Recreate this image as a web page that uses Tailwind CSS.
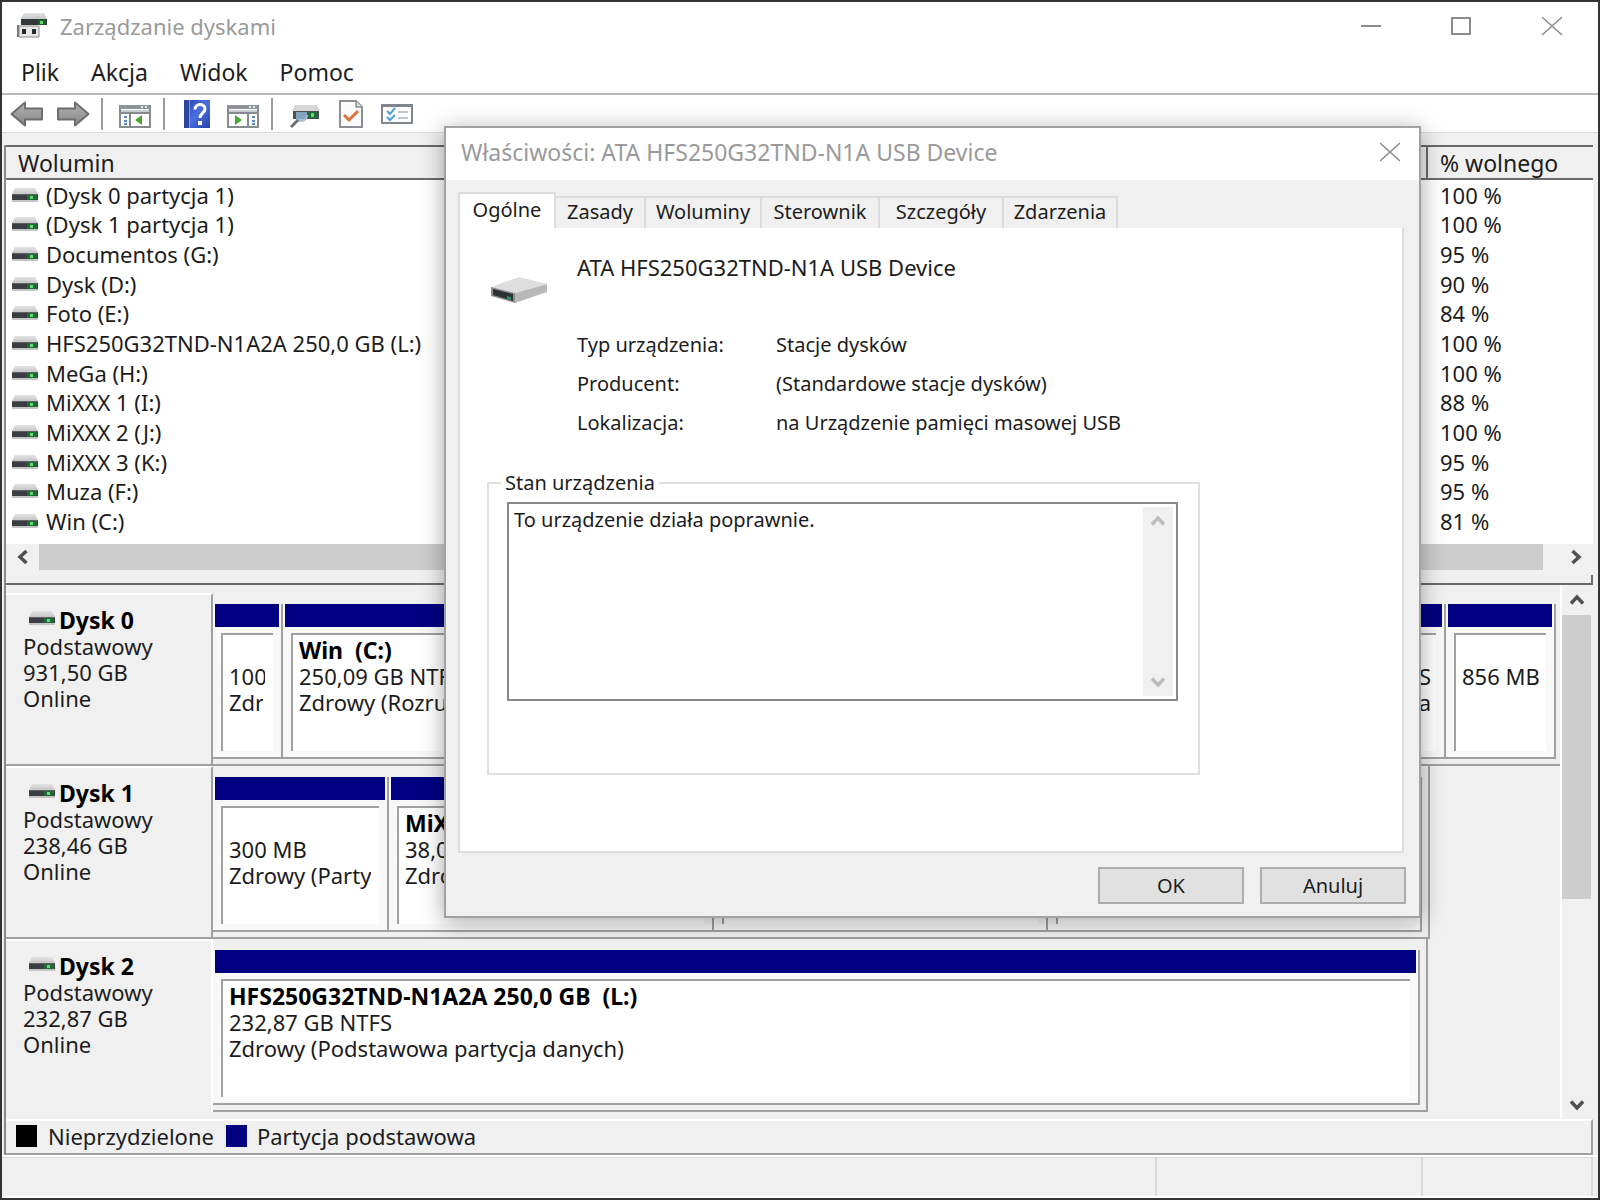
<!DOCTYPE html>
<html lang="pl">
<head>
<meta charset="utf-8">
<meta name="viewport" content="width=device-width, initial-scale=1">
<title>Zarządzanie dyskami</title>
<script src="https://cdn.jsdelivr.net/npm/@tailwindcss/browser@4"></script>
</head>
<body class="bg-[#333] font-['Noto_Sans',sans-serif] text-[22px] leading-[26px] text-[#1c1c1c]">

<!-- Shared icons -->
<svg class="absolute h-0 w-0" aria-hidden="true">
  <defs>
    <linearGradient id="lid" x1="0" y1="0" x2="0" y2="1"><stop offset="0" stop-color="#e4e4e4"/><stop offset="1" stop-color="#c6c6c6"/></linearGradient>
    <linearGradient id="arrowFill" x1="0" y1="0" x2="0" y2="1"><stop offset="0" stop-color="#b4b4b4"/><stop offset="1" stop-color="#858585"/></linearGradient>
    <linearGradient id="helpFill" x1="0" y1="0" x2="1" y2="1"><stop offset="0" stop-color="#2a44ac"/><stop offset="0.5" stop-color="#4a6fdc"/><stop offset="1" stop-color="#2742a8"/></linearGradient>
    <symbol id="drive" viewBox="0 0 26 14">
      <path d="M3 0h20l3 6H0z" fill="url(#lid)"/>
      <path d="M0 6h26v6H0z" fill="#3a3d42"/>
      <path d="M0 6h26v1H0z" fill="#5d6065"/>
      <path d="M15 7h10v5H15z" fill="#1f6b33"/>
      <path d="M18 8h3v3h-3z" fill="#63d873"/>
      <path d="M0 12h26v2H0z" fill="#c4c4c4"/>
    </symbol>
    <symbol id="arrow" viewBox="0 0 34 26">
      <path d="M1.500 13 15 1.500v6h17v11H15v6z" fill="url(#arrowFill)" stroke="#6e6e6e" stroke-width="2" stroke-linejoin="round"/>
    </symbol>
    <symbol id="chev" viewBox="0 0 16 12">
      <path d="M2 9.500 8 3l6 6.500" fill="none" stroke="currentColor" stroke-width="3.500"/>
    </symbol>
  </defs>
</svg>

<div class="relative flex min-h-screen flex-col border-2 border-[#333] bg-[#f0f0f0]">

  <!-- Title bar -->
  <header class="flex h-[51px] items-center bg-white pb-[3px] pl-[14px]">
    <svg class="h-7 w-8" viewBox="0 0 32 28" aria-hidden="true">
      <path d="M8 1h20l3 6H5z" fill="url(#lid)"/>
      <path d="M5 7h26v6H5z" fill="#33363b"/>
      <path d="M22 7h8v6h-8z" fill="#1f5c2e"/><path d="M24 9h3v3h-3z" fill="#63d873"/>
      <path d="M1 13h2v12H1z" fill="#777"/>
      <path d="M3 14h20v11H3z" fill="#e6e6e6" stroke="#8b8b8b"/>
      <path d="M6 17h4v5H6zM16 17h4v5h-4z" fill="#26282b"/>
    </svg>
    <h1 class="ml-3 flex-1 text-[#9a9a9a]">Zarządzanie dyskami</h1>
    <button class="flex h-full w-[90px] items-center justify-center" aria-label="Minimalizuj"><svg class="h-5 w-5" viewBox="0 0 20 20"><path d="M0 10h20" stroke="#8c8c8c" stroke-width="2"/></svg></button>
    <button class="flex h-full w-[90px] items-center justify-center" aria-label="Maksymalizuj"><svg class="h-5 w-5" viewBox="0 0 20 20"><path d="M1 2h18v16H1z" fill="none" stroke="#8c8c8c" stroke-width="2"/></svg></button>
    <button class="flex h-full w-[92px] items-center justify-center" aria-label="Zamknij"><svg class="h-5 w-5" viewBox="0 0 20 20"><path d="M0 1l20 18M20 1 0 19" stroke="#8c8c8c" stroke-width="1.500"/></svg></button>
  </header>

  <!-- Menu -->
  <nav class="flex h-10 items-center bg-white pb-[2px] pl-[3px] text-[23px]">
    <button class="px-4">Plik</button>
    <button class="px-4">Akcja</button>
    <button class="px-4">Widok</button>
    <button class="px-4">Pomoc</button>
  </nav>

  <!-- Toolbar -->
  <div class="flex h-10 items-center border-t-2 border-b border-t-[#b9b9b9] border-b-[#dcdcdc] bg-white pl-[2px]" role="toolbar">
    <button class="flex w-[46px] justify-center" aria-label="Wstecz"><svg class="h-[26px] w-[34px]"><use href="#arrow"/></svg></button>
    <button class="flex w-[46px] justify-center" aria-label="Dalej"><svg class="h-[26px] w-[34px] -scale-x-100"><use href="#arrow"/></svg></button>
    <span class="mr-[9px] ml-[5px] h-8 w-[2px] bg-[#9c9c9c]"></span>
    <button class="flex w-[46px] justify-center" aria-label="Pokaż drzewo konsoli">
      <svg class="h-7 w-8" viewBox="0 0 32 28"><path d="M1 6h30v21H1z" fill="#fff" stroke="#868b92" stroke-width="2"/><path d="M1 5h30v4H1z" fill="#8d949c"/><path d="M2 10h28v2H2z" fill="#c9ccd0"/><path d="M22 6h2v2h-2zM26 6h2v2h-2z" fill="#e8e8e8"/><path d="M1 13h30M11 13v14" stroke="#868b92" stroke-width="2"/><path d="M5 16h3v2H5zM5 20h3v2H5zM5 23h3v2H5z" fill="#5c8ccb"/><path d="M23 15v10l-7-5z" fill="#44a82c"/></svg>
    </button>
    <span class="mr-[9px] ml-[5px] h-8 w-[2px] bg-[#9c9c9c]"></span>
    <button class="flex w-[46px] justify-center" aria-label="Pomoc">
      <svg class="h-7 w-[26px]" viewBox="0 0 26 28"><path d="M0 0h26v28H0z" fill="url(#helpFill)"/><path d="M0 0h5v28H0z" fill="#2b459f"/><path d="M5 0h1v28H5z" fill="#7d97e2"/><path d="M11 9.500c0-6.500 10-6.500 10-.5 0 4-5 4-5 9" fill="none" stroke="#fff" stroke-width="3"/><path d="M14 21h4v4h-4z" fill="#fff"/></svg>
    </button>
    <button class="flex w-[46px] justify-center" aria-label="Pokaż okienko akcji">
      <svg class="h-7 w-8" viewBox="0 0 32 28"><path d="M1 6h30v21H1z" fill="#fff" stroke="#868b92" stroke-width="2"/><path d="M1 5h30v4H1z" fill="#8d949c"/><path d="M2 10h28v2H2z" fill="#c9ccd0"/><path d="M22 6h2v2h-2zM26 6h2v2h-2z" fill="#e8e8e8"/><path d="M1 13h30M21 13v14" stroke="#868b92" stroke-width="2"/><path d="M25 16h3v2h-3zM25 20h3v2h-3zM25 23h3v2h-3z" fill="#5c8ccb"/><path d="M8 15v10l7-5z" fill="#44a82c"/></svg>
    </button>
    <span class="mr-[9px] ml-[5px] h-8 w-[2px] bg-[#9c9c9c]"></span>
    <button class="flex w-[46px] justify-center" aria-label="Odśwież">
      <svg class="h-7 w-[30px]" viewBox="0 0 30 28"><path d="M5 5h22l3 6H2z" fill="#d6d6d6"/><path d="M3 11h26v8H3z" fill="#4b5157"/><path d="M17 12h11v6H17z" fill="#1f6b33"/><path d="M21 13h3v4h-3z" fill="#63d873"/><path d="M6 12h11v4c0 6-8 8-11 3z" fill="#8fb9d8" fill-opacity="0.800"/><path d="M17 15c0 6-7 7-10 4" fill="none" stroke="#a9bccb" stroke-width="2"/><path d="M8 20 1 27" stroke="#6b7075" stroke-width="3"/></svg>
    </button>
    <button class="flex w-[46px] justify-center" aria-label="Właściwości">
      <svg class="h-7 w-6" viewBox="0 0 24 28"><path d="M1 1h16l6 6v20H1z" fill="#fbfbfb" stroke="#8b8f94" stroke-width="2"/><path d="M17 1v6h6" fill="#ddd" stroke="#8b8f94" stroke-width="1.500"/><path d="m5 15 5 5 9-9" fill="none" stroke="#e2703a" stroke-width="3"/></svg>
    </button>
    <button class="flex w-[46px] justify-center" aria-label="Ustawienia">
      <svg class="h-6 w-8" viewBox="0 0 32 24"><path d="M1 3h30v18H1z" fill="#fdfdfd" stroke="#80868d" stroke-width="2"/><path d="M1 2h30v3H1z" fill="#80868d"/><path d="m6 9 3 3 5-6M6 15l3 3 5-5" fill="none" stroke="#4f9fd6" stroke-width="2"/><path d="M17 10h10M17 16h10" stroke="#c3c6c9" stroke-width="2"/></svg>
    </button>
  </div>

  <!-- Client area -->
  <main class="mt-3 mr-[5px] ml-[2px] flex flex-1 flex-col border-l-2 border-[#8a8a8a]">

    <!-- Volume list -->
    <section class="flex h-[399px] flex-col border-t-2 border-[#6a6a6a] bg-white">
      <table class="w-full table-fixed border-collapse text-left text-[23px]">
        <colgroup><col><col class="w-[166px]"></colgroup>
        <thead class="bg-[#f0f0f0]">
          <tr class="h-8 border-b-2 border-[#6a6a6a]">
            <th class="pl-3 font-normal" scope="col">Wolumin</th>
            <th class="border-l-2 border-[#6a6a6a] pl-3 font-normal" scope="col">% wolnego</th>
          </tr>
        </thead>
      </table>
      <table class="h-[356px] w-full table-fixed border-collapse text-left [&_td:last-child]:pl-[13px] [&_td]:p-0 [&_th]:p-0 [&_th]:pl-[6px] [&_th]:font-normal [&_th_span]:flex [&_th_span]:items-center [&_th_span]:gap-2 [&_svg]:h-[14px] [&_svg]:w-[26px]" aria-label="Woluminy">
        <colgroup><col><col class="w-[166px]"></colgroup>
        <tbody>
          <tr><th scope="row"><span><svg><use href="#drive"/></svg>(Dysk 0 partycja 1)</span></th><td>100 %</td></tr>
          <tr><th scope="row"><span><svg><use href="#drive"/></svg>(Dysk 1 partycja 1)</span></th><td>100 %</td></tr>
          <tr><th scope="row"><span><svg><use href="#drive"/></svg>Documentos (G:)</span></th><td>95 %</td></tr>
          <tr><th scope="row"><span><svg><use href="#drive"/></svg>Dysk (D:)</span></th><td>90 %</td></tr>
          <tr><th scope="row"><span><svg><use href="#drive"/></svg>Foto (E:)</span></th><td>84 %</td></tr>
          <tr><th scope="row"><span><svg><use href="#drive"/></svg>HFS250G32TND-N1A2A 250,0 GB (L:)</span></th><td>100 %</td></tr>
          <tr><th scope="row"><span><svg><use href="#drive"/></svg>MeGa (H:)</span></th><td>100 %</td></tr>
          <tr><th scope="row"><span><svg><use href="#drive"/></svg>MiXXX 1 (I:)</span></th><td>88 %</td></tr>
          <tr><th scope="row"><span><svg><use href="#drive"/></svg>MiXXX 2 (J:)</span></th><td>100 %</td></tr>
          <tr><th scope="row"><span><svg><use href="#drive"/></svg>MiXXX 3 (K:)</span></th><td>95 %</td></tr>
          <tr><th scope="row"><span><svg><use href="#drive"/></svg>Muza (F:)</span></th><td>95 %</td></tr>
          <tr><th scope="row"><span><svg><use href="#drive"/></svg>Win (C:)</span></th><td>81 %</td></tr>
        </tbody>
      </table>
    </section>
    <div class="flex h-[26px] items-stretch text-[#505050]">
      <button class="flex w-[33px] items-center justify-center" aria-label="W lewo"><svg class="h-3 w-4 -rotate-90"><use href="#chev"/></svg></button>
      <div class="mr-4 flex-1 bg-[#cdcdcd]"></div>
      <button class="flex w-[34px] items-center justify-center" aria-label="W prawo"><svg class="h-3 w-4 rotate-90"><use href="#chev"/></svg></button>
    </div>
    <div class="flex h-[15px] flex-col justify-end border-b-2 border-[#6a6a6a]"><div class="h-2 border-r-2 border-[#6a6a6a]"></div></div>

    <!-- Disk map -->
    <section class="flex flex-1">
      <div class="min-w-0 flex-1 pt-2">

        <div class="flex h-[173px]">
          <div class="w-[207px] border-t-2 border-r-2 border-b-2 border-t-white border-r-[#a0a0a0] border-b-[#a0a0a0] pt-3 pl-[17px]">
            <h2 class="flex items-center gap-1 pl-[6px] text-[23px] font-bold text-black"><svg class="mb-1 h-[14px] w-[26px]"><use href="#drive"/></svg>Dysk 0</h2>
            <p>Podstawowy</p><p>931,50 GB</p><p>Online</p>
          </div>
          <div class="flex min-w-0 flex-1 border-b-2 border-[#a0a0a0] pt-[11px] pb-[5px]">
            <div class="flex w-[70px] flex-col border-r-2 border-b-2 border-[#a0a0a0] bg-[#f8f8f8]">
              <div class="mx-[2px] h-[23px] bg-[#000080]"></div>
              <div class="mt-[6px] mr-2 mb-[6px] ml-2 flex-1 overflow-hidden border-t-2 border-l-2 border-[#a0a0a0] bg-white pt-7 pl-[6px] whitespace-nowrap"><p class="mr-2 overflow-x-clip">100 MB</p><p class="mr-[10px] overflow-x-clip">Zdrowy</p></div>
            </div>
            <div class="flex flex-1 flex-col border-r-2 border-b-2 border-[#a0a0a0] bg-[#f8f8f8]">
              <div class="mx-[2px] h-[23px] bg-[#000080]"></div>
              <div class="mt-[6px] mr-2 mb-[6px] ml-2 flex-1 overflow-hidden border-t-2 border-l-2 border-[#a0a0a0] bg-white pt-[2px] pl-[6px] whitespace-nowrap"><p class="text-[23px] font-bold whitespace-pre text-black">Win  (C:)</p><p>250,09 GB NTFS</p><p>Zdrowy (Rozruch)</p></div>
            </div>
            <div class="flex w-[192px] flex-col border-r-2 border-b-2 border-[#a0a0a0] bg-[#f8f8f8]">
              <div class="mx-[2px] h-[23px] bg-[#000080]"></div>
              <div class="mt-[6px] mr-2 mb-[6px] ml-2 flex-1 overflow-hidden border-t-2 border-l-2 border-[#a0a0a0] bg-white pt-7 pr-[5px] text-right whitespace-nowrap"><p>GB NTFS</p><p>(Podsta</p></div>
            </div>
            <div class="flex w-[110px] flex-col border-r-2 border-b-2 border-[#a0a0a0] bg-[#f8f8f8]">
              <div class="mx-[2px] h-[23px] bg-[#000080]"></div>
              <div class="mt-[6px] mr-2 mb-[6px] ml-2 flex-1 border-t-2 border-l-2 border-[#a0a0a0] bg-white pt-7 pl-[6px] whitespace-nowrap"><p>856 MB</p></div>
            </div>
            <div class="w-1"></div>
          </div>
        </div>

        <div class="flex h-[173px]">
          <div class="w-[207px] border-t-2 border-r-2 border-b-2 border-t-white border-r-[#a0a0a0] border-b-[#a0a0a0] pt-3 pl-[17px]">
            <h2 class="flex items-center gap-1 pl-[6px] text-[23px] font-bold text-black"><svg class="mb-1 h-[14px] w-[26px]"><use href="#drive"/></svg>Dysk 1</h2>
            <p>Podstawowy</p><p>238,46 GB</p><p>Online</p>
          </div>
          <div class="mr-[130px] flex min-w-0 flex-1 border-r-2 border-b-2 border-[#a0a0a0] pt-[11px] pr-[6px] pb-[5px]">
            <div class="flex w-[176px] flex-col border-r-2 border-b-2 border-[#a0a0a0] bg-[#f8f8f8]">
              <div class="mx-[2px] h-[23px] bg-[#000080]"></div>
              <div class="mt-[6px] mr-2 mb-[6px] ml-2 flex-1 overflow-hidden border-t-2 border-l-2 border-[#a0a0a0] bg-white pt-7 pl-[6px] whitespace-nowrap"><p>300 MB</p><p class="mr-2 overflow-x-clip">Zdrowy (Partycja)</p></div>
            </div>
            <div class="flex w-[325px] flex-col border-r-2 border-b-2 border-[#a0a0a0] bg-[#f8f8f8]">
              <div class="mx-[2px] h-[23px] bg-[#000080]"></div>
              <div class="mt-[6px] mr-2 mb-[6px] ml-2 flex-1 overflow-hidden border-t-2 border-l-2 border-[#a0a0a0] bg-white pt-[2px] pl-[6px] whitespace-nowrap"><p class="text-[23px] font-bold whitespace-pre text-black">MiXXX 1  (I:)</p><p>38,09 GB NTFS</p><p>Zdrowy</p></div>
            </div>
            <div class="flex w-[334px] flex-col border-r-2 border-b-2 border-[#a0a0a0] bg-[#f8f8f8]">
              <div class="mx-[2px] h-[23px] bg-[#000080]"></div>
              <div class="mt-[6px] mr-2 mb-[6px] ml-2 flex-1 border-t-2 border-l-2 border-[#a0a0a0] bg-white"></div>
            </div>
            <div class="flex flex-1 flex-col border-r-2 border-b-2 border-[#a0a0a0] bg-[#f8f8f8]">
              <div class="mx-[2px] h-[23px] bg-[#000080]"></div>
              <div class="mt-[6px] mr-2 mb-[6px] ml-2 flex-1 border-t-2 border-l-2 border-[#a0a0a0] bg-white"></div>
            </div>
          </div>
        </div>

        <div class="flex h-[173px]">
          <div class="w-[207px] border-t-2 border-r-2 border-t-white border-r-white pt-3 pl-[17px]">
            <h2 class="flex items-center gap-1 pl-[6px] text-[23px] font-bold text-black"><svg class="mb-1 h-[14px] w-[26px]"><use href="#drive"/></svg>Dysk 2</h2>
            <p>Podstawowy</p><p>232,87 GB</p><p>Online</p>
          </div>
          <div class="mr-[132px] flex min-w-0 flex-1 border-r-2 border-b-2 border-[#a0a0a0] pt-[11px] pr-[6px] pb-[5px]">
            <div class="flex flex-1 flex-col border-r-2 border-b-2 border-[#a0a0a0] bg-[#f8f8f8]">
              <div class="mx-[2px] h-[23px] bg-[#000080]"></div>
              <div class="mt-[6px] mr-2 mb-[6px] ml-2 flex-1 overflow-hidden border-t-2 border-l-2 border-[#a0a0a0] bg-white pt-[2px] pl-[6px] whitespace-nowrap"><p class="text-[23px] font-bold whitespace-pre text-black">HFS250G32TND-N1A2A 250,0 GB  (L:)</p><p>232,87 GB NTFS</p><p>Zdrowy (Podstawowa partycja danych)</p></div>
            </div>
          </div>
        </div>
      </div>

      <!-- Vertical scroll bar -->
      <div class="flex w-[33px] flex-col border-l-2 border-white pr-[2px] text-[#505050]">
        <button class="flex h-[30px] items-center justify-center" aria-label="W górę"><svg class="h-3 w-4"><use href="#chev"/></svg></button>
        <div class="h-[284px] bg-[#cdcdcd]"></div>
        <div class="flex-1"></div>
        <button class="flex h-7 items-center justify-center" aria-label="W dół"><svg class="h-3 w-4 rotate-180"><use href="#chev"/></svg></button>
      </div>
    </section>

    <!-- Legend -->
    <div class="flex h-9 items-center border-t-2 border-r-2 border-b-2 border-t-white border-r-[#a0a0a0] border-b-[#a0a0a0] pb-[2px] pl-[10px]">
      <span class="h-[22px] w-[21px] bg-black"></span><span class="ml-[11px]">Nieprzydzielone</span>
      <span class="ml-3 h-[22px] w-[21px] bg-[#000080]"></span><span class="ml-[10px]">Partycja podstawowa</span>
    </div>
  </main>

  <!-- Status bar -->
  <footer class="flex h-[43px] border-t-2 border-b-2 border-white pr-[5px]">
    <div class="flex-1 border-t border-r-2 border-[#dadada]"></div>
    <div class="w-[266px] border-t border-r-2 border-[#dadada]"></div>
    <div class="w-[170px] border-t border-r-2 border-[#dadada]"></div>
  </footer>

  <!-- Device properties dialog -->
  <div class="absolute top-[124px] left-[442px] flex w-[977px] flex-col border-2 border-[#a2a2a2] bg-[#f0f0f0] text-[20px] shadow-[0_4px_22px_rgba(0,0,0,0.35)]" role="dialog" aria-labelledby="dlg-title">
    <div class="flex h-[52px] items-center bg-white pb-1 pl-[15px]">
      <h2 id="dlg-title" class="flex-1 text-[23px] text-[#9a9a9a]">Właściwości: ATA HFS250G32TND-N1A USB Device</h2>
      <button class="flex h-full w-[58px] items-center justify-center" aria-label="Zamknij"><svg class="h-5 w-5" viewBox="0 0 20 20"><path d="M0 1l20 18M20 1 0 19" stroke="#8c8c8c" stroke-width="1.500"/></svg></button>
    </div>

    <div class="flex items-end px-3 pt-3 [&_button]:border-t-2 [&_button]:border-r-2 [&_button]:border-[#dcdcdc] [&_button]:pb-[2px]" role="tablist">
      <button class="h-9 w-[98px] border-l-2 bg-white" role="tab" aria-selected="true">Ogólne</button>
      <button class="h-8 w-[90px]" role="tab">Zasady</button>
      <button class="h-8 w-[116px]" role="tab">Woluminy</button>
      <button class="h-8 w-[118px]" role="tab">Sterownik</button>
      <button class="h-8 w-[124px]" role="tab">Szczegóły</button>
      <button class="h-8 w-[114px]" role="tab">Zdarzenia</button>
    </div>

    <div class="mr-[15px] ml-3 h-[625px] border-2 border-t-0 border-[#dcdcdc] bg-white pt-[26px] pr-[202px] pl-[27px]" role="tabpanel">
      <div class="flex items-start">
        <svg class="mt-[22px] ml-[2px] h-7 w-[60px]" viewBox="0 0 60 28" aria-hidden="true">
          <path d="M2 11 30 1l28 7-32 9z" fill="#dedede"/>
          <path d="M26 17 58 8v8L26 27z" fill="#b9b9b9"/>
          <path d="M2 11 26 17v10L2 20z" fill="#8b8e90"/>
          <path d="m4 13 20 5v7L4 19z" fill="#2c3133"/>
          <path d="m18 20 4 1v3l-4-1z" fill="#2f8f6a"/>
        </svg>
        <p class="ml-7 text-[22px]">ATA HFS250G32TND-N1A USB Device</p>
      </div>
      <dl class="mt-[28px] ml-[90px] grid grid-cols-[199px_1fr] gap-y-[13px] whitespace-nowrap">
        <dt>Typ urządzenia:</dt><dd>Stacje dysków</dd>
        <dt>Producent:</dt><dd>(Standardowe stacje dysków)</dd>
        <dt>Lokalizacja:</dt><dd>na Urządzenie pamięci masowej USB</dd>
      </dl>
      <fieldset class="mt-[34px] h-[305px] border-2 border-[#e0e0e0] px-3">
        <legend class="px-0"><label for="state" class="px-1">Stan urządzenia</label></legend>
        <div class="mt-[6px] mr-2 ml-[6px] flex h-[199px] border-2 border-[#8a8a8a] bg-white p-[3px]">
          <textarea id="state" readonly class="flex-1 resize-none overflow-hidden pl-[2px] outline-none">To urządzenie działa poprawnie.</textarea>
          <div class="flex w-[30px] flex-col items-center justify-between bg-[#f0f0f0] py-2 text-[#bcbcbc]">
            <svg class="h-3 w-4"><use href="#chev"/></svg>
            <svg class="h-3 w-4 rotate-180"><use href="#chev"/></svg>
          </div>
        </div>
      </fieldset>
    </div>

    <div class="flex justify-end gap-4 px-[13px] pt-[14px] pb-3">
      <button class="h-[37px] w-[146px] border-2 border-[#adadad] bg-[#e1e1e1]">OK</button>
      <button class="h-[37px] w-[146px] border-2 border-[#adadad] bg-[#e1e1e1]">Anuluj</button>
    </div>
  </div>
</div>
</body>
</html>
